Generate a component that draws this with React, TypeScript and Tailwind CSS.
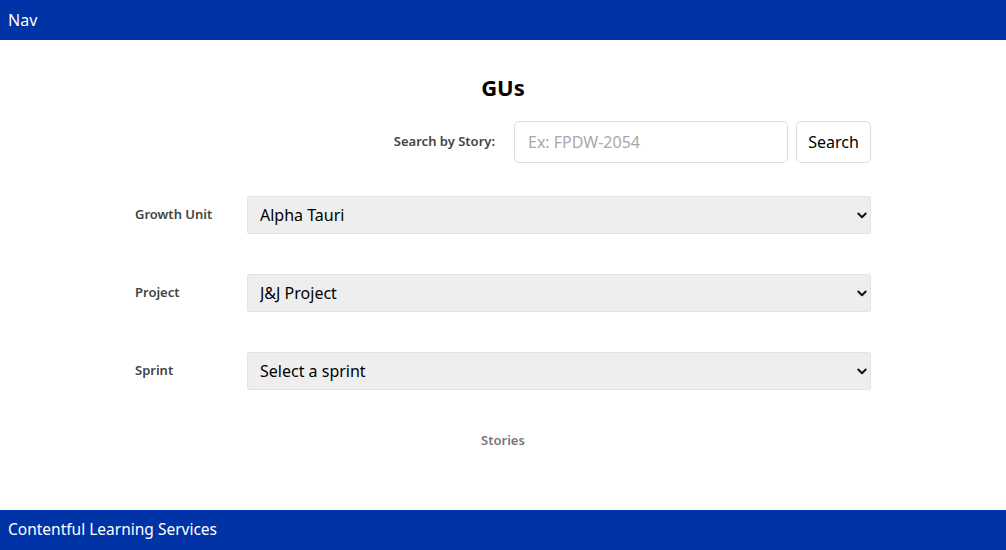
import React, { useState } from 'react';

const fields = [
  { label: 'Growth Unit', value: 'Alpha Tauri', options: ['Alpha Tauri', 'Beta Centauri', 'Gamma Draconis'] },
  { label: 'Project', value: 'J&J Project', options: ['J&J Project', 'Internal Tools'] },
  { label: 'Sprint', value: 'Select a sprint', options: ['Select a sprint', 'Sprint 1', 'Sprint 2'] },
];

const Chevron: React.FC = () => (
  <svg viewBox="0 0 16 16" className="w-[12px] h-[12px]" fill="none" stroke="#111" strokeWidth={2.6} strokeLinecap="round" strokeLinejoin="round">
    <path d="M3 6l5 5 5-5" />
  </svg>
);

const App: React.FC = () => {
  const [story, setStory] = useState('');

  return (
    <div className="min-h-screen flex flex-col bg-white text-black" style={{ fontFamily: '"Noto Sans", "Open Sans", sans-serif' }}>
      <header className="h-[40px] bg-[#0033a6] text-white flex items-center px-[8px] text-[16px]">Nav</header>

      <main className="flex-1 flex flex-col items-center pt-[32px]">
        <h1 className="text-[22px] leading-[30px] font-bold">GUs</h1>

        <div className="w-[736px] flex flex-col">
          <div className="flex justify-end items-center mt-[19px]">
            <label className="text-[13px] font-semibold text-[#444] mr-[19px]">Search by Story:</label>
            <input
              value={story}
              onChange={(e) => setStory(e.target.value)}
              placeholder="Ex: FPDW-2054"
              className="w-[274px] h-[42px] border border-[#dcdcdc] rounded-[5px] px-[13px] text-[16px] placeholder-[#a8a8a8] outline-none"
            />
            <button className="ml-[8px] w-[75px] h-[42px] border border-[#dcdcdc] rounded-[5px] text-[16px] bg-white">Search</button>
          </div>

          <div className="flex flex-col gap-[40px] mt-[33px]">
            {fields.map((f) => (
              <div key={f.label} className="flex items-center">
                <label className="w-[112px] text-[13px] font-semibold text-[#444]">{f.label}</label>
                <div className="relative flex-1">
                  <select
                    defaultValue={f.value}
                    className="appearance-none w-full h-[38px] bg-[#eeeeee] border border-[#e4e4e4] rounded-[2px] pl-[12px] text-[16px] outline-none"
                  >
                    {f.options.map((o) => (
                      <option key={o}>{o}</option>
                    ))}
                  </select>
                  <span className="pointer-events-none absolute right-[3px] top-1/2 -translate-y-1/2 w-[12px] h-[12px] flex items-center">
                    <Chevron />
                  </span>
                </div>
              </div>
            ))}
          </div>

          <p className="mt-[41px] text-center text-[13px] leading-[18px] font-semibold text-[#777]">Stories</p>
        </div>
      </main>

      <footer className="h-[40px] bg-[#0033a6] text-white flex items-center px-[8px] text-[15.5px]">Contentful Learning Services</footer>
    </div>
  );
};

export default App;
